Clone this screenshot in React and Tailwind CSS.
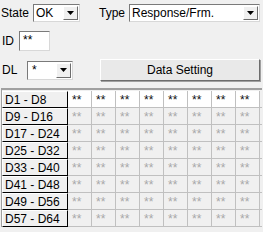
import React from 'react'

const rows = ['D1 - D8', 'D9 - D16', 'D17 - D24', 'D25 - D32', 'D33 - D40', 'D41 - D48', 'D49 - D56', 'D57 - D64']

function Arrow() {
  return (
    <svg width="7" height="4" viewBox="0 0 7 4">
      <path d="M0 0H7L3.5 4Z" fill="#000" />
    </svg>
  )
}

function Combo({ value, className }) {
  return (
    <div className={`flex h-full bg-white border border-[#7a7a7a] border-r-[#d8d8d8] border-b-[#d8d8d8] ${className}`}>
      <div className="flex-1 flex items-center pl-[2px] overflow-hidden whitespace-nowrap">{value}</div>
      <div className="w-[15px] my-[1px] mr-[1px] flex items-center justify-center bg-[#f0f0f0] border border-[#fff] border-r-[#6d6d6d] border-b-[#6d6d6d]">
        <Arrow />
      </div>
    </div>
  )
}

export default function App() {
  return (
    <div
      className="w-[263px] h-[232px] bg-[#f0f0f0] overflow-hidden text-[12px] text-black leading-none"
      style={{ fontFamily: '"Liberation Sans", Arial, sans-serif' }}
    >
      {/* State / Type */}
      <div className="flex items-center h-[18px] mt-[4px]">
        <span className="w-[33px] pl-[1px]">State</span>
        <Combo value="OK" className="w-[47px]" />
        <span className="w-[30px] ml-[19px]">Type</span>
        <Combo value="Response/Frm." className="w-[131px]" />
      </div>

      {/* ID */}
      <div className="flex items-center h-[20px] mt-[9px]">
        <span className="w-[19px] pl-[2px]">ID</span>
        <div className="w-[31px] h-full bg-white border border-[#7a7a7a] border-r-[#d8d8d8] border-b-[#d8d8d8] pl-[3px] pt-[2px] text-[12px]">
          **
        </div>
      </div>

      {/* DL / Data Setting */}
      <div className="flex items-center h-[22px] mt-[8px]">
        <span className="w-[27px] pl-[2px]">DL</span>
        <div className="h-[19px] flex">
          <Combo value={<span className="text-[12px] pl-[2px]">*</span>} className="w-[46px]" />
        </div>
        <button className="ml-[27px] w-[160px] h-full bg-[#e9e9e9] border border-[#fff] border-r-[#6d6d6d] border-b-[#6d6d6d] shadow-[1px_1px_0_#a0a0a0] text-[12px]">
          Data Setting
        </button>
      </div>

      {/* Grid */}
      <div className="mt-[7px] ml-[1px] w-[261px] border-t-2 border-l border-[#a0a0a0] pt-[1px]">
        {rows.map((label, r) => (
          <div key={label} className="flex h-[17px] border-b border-[#c0c0c0]">
            <div className="w-[66px] flex items-center pl-[2px] bg-[#f0f0f0] border-t border-l border-[#fff] border-r border-r-[#000] border-b border-b-[#000] mb-[-1px]">
              {label}
            </div>
            {Array.from({ length: 8 }).map((_, c) => (
              <div
                key={c}
                className={`w-[24px] flex items-start pt-[3px] pl-[4px] border-r border-[#c0c0c0] text-[12px] ${
                  r === 0 ? 'bg-white text-[#111]' : 'bg-[#f0f0f0] text-[#a8a8a8]'
                }`}
              >
                **
              </div>
            ))}
          </div>
        ))}
      </div>
    </div>
  )
}
